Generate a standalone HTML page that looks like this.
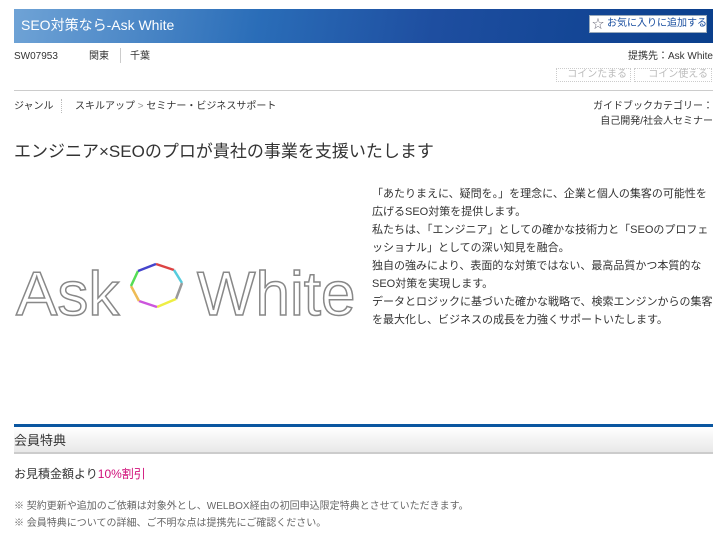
<!DOCTYPE html>
<html><head><meta charset="utf-8"><style>
body{margin:0;width:726px;height:537px;background:#fff;font-family:"Liberation Sans","Noto Sans CJK JP",sans-serif;color:#333;position:relative;overflow:hidden}
.a{position:absolute;white-space:nowrap}
.s{font-size:10px;line-height:14px}
</style></head><body>
<div class="a" style="left:14px;top:9px;width:699px;height:34px;background:linear-gradient(100deg,#6fa3d6 0%,#2a6db8 35%,#1e4ea0 60%,#0a3f8c 100%)"></div>
<div class="a" style="left:21px;top:16px;font-size:14px;line-height:18px;color:#fff">SEO対策なら-Ask White</div>
<div class="a" style="left:589px;top:15px;width:118px;height:18px;background:#fff;border:1px solid #9ab;box-sizing:border-box;font-size:10px;color:#1a4fa0;line-height:16px;padding-left:17px;overflow:hidden">お気に入りに追加する</div>
<div class="a" style="left:592px;top:16px;font-size:12px;line-height:16px;color:#667">☆</div>
<div class="a s" style="left:14px;top:50px">SW07953</div>
<div class="a s" style="left:89px;top:50px">関東</div>
<div class="a" style="left:120px;top:48px;width:1px;height:15px;background:#ccc"></div>
<div class="a s" style="left:130px;top:50px">千葉</div>
<div class="a s" style="right:13px;top:50px">提携先：Ask White</div>
<div class="a s" style="left:556px;top:68px;width:75px;height:14px;border:1px dotted #ccc;color:#bbb;text-align:right;padding-right:3px;box-sizing:border-box;line-height:12px">コインたまる</div>
<div class="a s" style="left:634px;top:68px;width:78px;height:14px;border:1px dotted #ccc;color:#bbb;text-align:right;padding-right:3px;box-sizing:border-box;line-height:12px">コイン使える</div>
<div class="a" style="left:14px;top:90px;width:699px;height:1px;background:#ccc"></div>
<div class="a s" style="left:14px;top:100px">ジャンル</div>
<div class="a" style="left:61px;top:99px;width:1px;height:14px;border-left:1px dotted #bbb"></div>
<div class="a s" style="left:75px;top:100px">スキルアップ <span style="color:#999">&gt;</span> セミナー・ビジネスサポート</div>
<div class="a s" style="right:13px;top:100px">ガイドブックカテゴリー：</div>
<div class="a s" style="right:13px;top:115px">自己開発/社会人セミナー</div>
<div class="a" style="left:14px;top:141px;font-size:17px;line-height:22px;color:#333">エンジニア×SEOのプロが貴社の事業を支援いたします</div>
<svg class="a" style="left:14px;top:255px" width="345" height="70">
<text x="2" y="60" font-family="Liberation Sans" font-size="62" fill="#fff" stroke="#888" stroke-width="1.5">Ask</text>
<text x="183" y="60" font-family="Liberation Sans" font-size="62" fill="#fff" stroke="#888" stroke-width="1.5">White</text>
<g stroke-width="2.5" fill="none">
<line x1="142" y1="9" x2="160" y2="15" stroke="#d44"/><line x1="160" y1="15" x2="168" y2="28" stroke="#5cd"/>
<line x1="168" y1="28" x2="162" y2="44" stroke="#999"/><line x1="162" y1="44" x2="143" y2="52" stroke="#ee4"/>
<line x1="143" y1="52" x2="125" y2="46" stroke="#c5d"/><line x1="125" y1="46" x2="117" y2="31" stroke="#eb5"/>
<line x1="117" y1="31" x2="124" y2="16" stroke="#5d5"/><line x1="124" y1="16" x2="142" y2="9" stroke="#44c"/>
</g></svg>
<div class="a" style="left:372px;top:185px;font-size:11px;line-height:18px;color:#333;white-space:normal;width:343px">「あたりまえに、疑問を。」を理念に、企業と個人の集客の可能性を広げるSEO対策を提供します。<br>私たちは、「エンジニア」としての確かな技術力と「SEOのプロフェッショナル」としての深い知見を融合。<br>独自の強みにより、表面的な対策ではない、最高品質かつ本質的なSEO対策を実現します。<br>データとロジックに基づいた確かな戦略で、検索エンジンからの集客を最大化し、ビジネスの成長を力強くサポートいたします。</div>
<div class="a" style="left:14px;top:424px;width:699px;height:3px;background:#0a56a0"></div>
<div class="a" style="left:14px;top:427px;width:699px;height:25px;background:linear-gradient(#fff,#e8e8e8);border-bottom:2px solid #ccc"></div>
<div class="a" style="left:14px;top:432px;font-size:13px;line-height:18px;color:#333">会員特典</div>
<div class="a" style="left:14px;top:466px;font-size:12px;line-height:16px">お見積金額より<span style="color:#d0107a">10%割引</span></div>
<div class="a s" style="left:14px;top:500px;color:#666">※ 契約更新や追加のご依頼は対象外とし、WELBOX経由の初回申込限定特典とさせていただきます。</div>
<div class="a s" style="left:14px;top:517px;color:#666">※ 会員特典についての詳細、ご不明な点は提携先にご確認ください。</div>
</body></html>
